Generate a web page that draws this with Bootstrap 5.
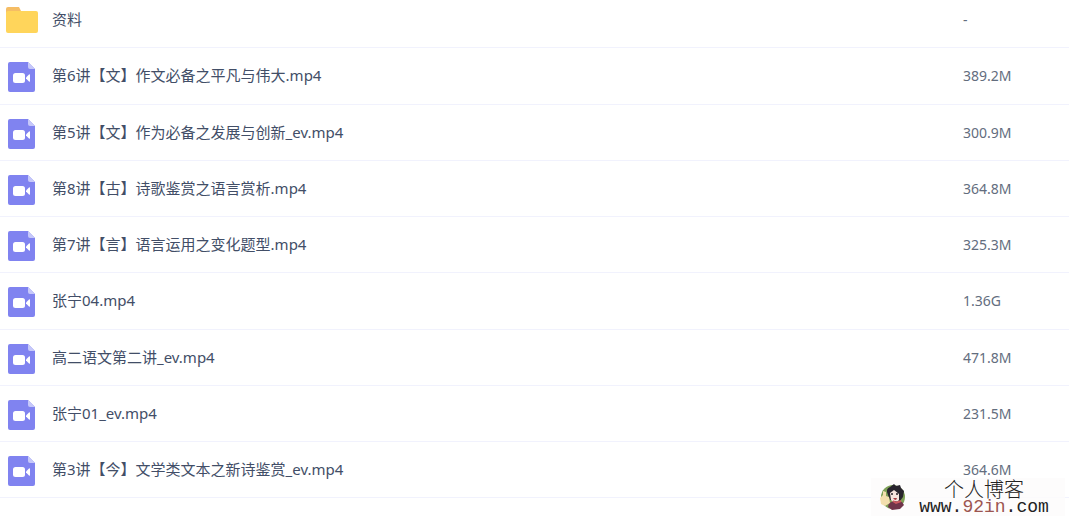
<!DOCTYPE html>
<html lang="zh-CN">
<head>
<meta charset="utf-8">
<meta name="viewport" content="width=device-width, initial-scale=1">
<title>资料</title>
<link href="https://cdn.jsdelivr.net/npm/bootstrap@5.3.0/dist/css/bootstrap.min.css" rel="stylesheet">
<style>
body{font-family:"Noto Sans","Noto Sans CJK SC",sans-serif;font-size:15px;color:#424e67;background:#fff}
.file-table{table-layout:fixed;border-collapse:separate;border-spacing:0;line-height:20px}
.file-table td{height:56px;padding:0;border-bottom:1px solid #f1f2fd;vertical-align:middle}
.file-table tr:nth-child(4n+2) td{height:57px}
.file-table tr:first-child td{height:48px;padding-bottom:8px}
.file-table .file-size{width:106px;font-size:14px;color:#636d7e}
.file-link{display:flex;align-items:center;gap:14px;padding-left:5px;color:inherit;text-decoration:none}
.file-link svg{flex:none}
.file-link span{padding-bottom:2px}
.site-mark{right:4px;bottom:2px;width:194px;height:38px;padding-left:8px;background:rgba(253,252,252,.85);color:#222}
.site-mark svg{flex:none}
.site-text{width:132px;text-align:center}
.site-title{font-family:"Noto Sans CJK SC",sans-serif;font-weight:300;font-size:20px;line-height:20px}
.site-url{font-family:"Liberation Mono",monospace;font-size:18px;line-height:16px}
.site-url b{font-weight:400;color:#9c5550}
</style>
</head>
<body>
<svg width="0" height="0" class="position-absolute" aria-hidden="true">
<defs>
<symbol id="video" viewBox="0 0 33 32">
<path d="M5 2h18l7 7v21a2 2 0 0 1-2 2H5a2 2 0 0 1-2-2V4a2 2 0 0 1 2-2z" fill="#8083f0"/>
<path d="M23 2l7 7h-5a2 2 0 0 1-2-2z" fill="#c6c8fa"/>
<rect x="8" y="13" width="12" height="10" rx="2.5" fill="#fff"/>
<path d="M21 17.500l3-3q1-.8 1 .5v6q0 1.300-1 .5l-3-3z" fill="#fff"/>
</symbol>
</defs>
</svg>
<main class="position-relative pb-3">
<table class="file-table w-100 mb-1">
<tbody>
<tr><td><a class="file-link" href="#"><svg width="33" height="28" viewBox="0 0 33 28"><path d="M1 6V3a2 2 0 0 1 2-2h11l2 4v4H1z" fill="#f5bd65"/><path d="M1 7a2 2 0 0 1 2-2h28a2 2 0 0 1 2 2v18a2 2 0 0 1-2 2H3a2 2 0 0 1-2-2z" fill="#ffd55b"/></svg><span>资料</span></a></td><td class="file-size">-</td></tr>
<tr><td><a class="file-link" href="#"><svg width="33" height="32"><use href="#video"/></svg><span>第6讲【文】作文必备之平凡与伟大.mp4</span></a></td><td class="file-size">389.2M</td></tr>
<tr><td><a class="file-link" href="#"><svg width="33" height="32"><use href="#video"/></svg><span>第5讲【文】作为必备之发展与创新_ev.mp4</span></a></td><td class="file-size">300.9M</td></tr>
<tr><td><a class="file-link" href="#"><svg width="33" height="32"><use href="#video"/></svg><span>第8讲【古】诗歌鉴赏之语言赏析.mp4</span></a></td><td class="file-size">364.8M</td></tr>
<tr><td><a class="file-link" href="#"><svg width="33" height="32"><use href="#video"/></svg><span>第7讲【言】语言运用之变化题型.mp4</span></a></td><td class="file-size">325.3M</td></tr>
<tr><td><a class="file-link" href="#"><svg width="33" height="32"><use href="#video"/></svg><span>张宁04.mp4</span></a></td><td class="file-size">1.36G</td></tr>
<tr><td><a class="file-link" href="#"><svg width="33" height="32"><use href="#video"/></svg><span>高二语文第二讲_ev.mp4</span></a></td><td class="file-size">471.8M</td></tr>
<tr><td><a class="file-link" href="#"><svg width="33" height="32"><use href="#video"/></svg><span>张宁01_ev.mp4</span></a></td><td class="file-size">231.5M</td></tr>
<tr><td><a class="file-link" href="#"><svg width="33" height="32"><use href="#video"/></svg><span>第3讲【今】文学类文本之新诗鉴赏_ev.mp4</span></a></td><td class="file-size">364.6M</td></tr>
</tbody>
</table>
<div class="site-mark position-absolute d-flex align-items-center">
<svg width="27" height="28" viewBox="0 0 27 28" class="me-2 ms-0">
<circle cx="14" cy="14" r="12" fill="#7fa158"/>
<path d="M9 12Q6 6 11 4L15 1 17 3 21 2 22 5 25 8 24 14 21 18 11 17z" fill="#28242d"/>
<path d="M11 10l4-3 5 4v6q-4 5-8 0z" fill="#f6e4dd"/>
<path d="M12 11h2m3 0h2" stroke="#29232a" stroke-width="1.500"/>
<path d="M14 15h4q-1 4-4 0" fill="#a63f44"/>
<path d="M10 20l5-2 8 1 2 3-4 4-8 1-4-3z" fill="#70344a"/>
<path d="M14 18l3 2 5-2" fill="none" stroke="#cc5960" stroke-width="2"/>
<path d="M1 15l3-3V8l3 1v4l3 1 1 6-5 3-4-2z" fill="#f3dfae"/>
</svg>
<div class="site-text ms-1">
<div class="site-title">个人博客</div>
<div class="site-url">www.<b>92in</b>.com</div>
</div>
</div>
</main>
<script src="https://cdn.jsdelivr.net/npm/bootstrap@5.3.0/dist/js/bootstrap.bundle.min.js"></script>
</body>
</html>
